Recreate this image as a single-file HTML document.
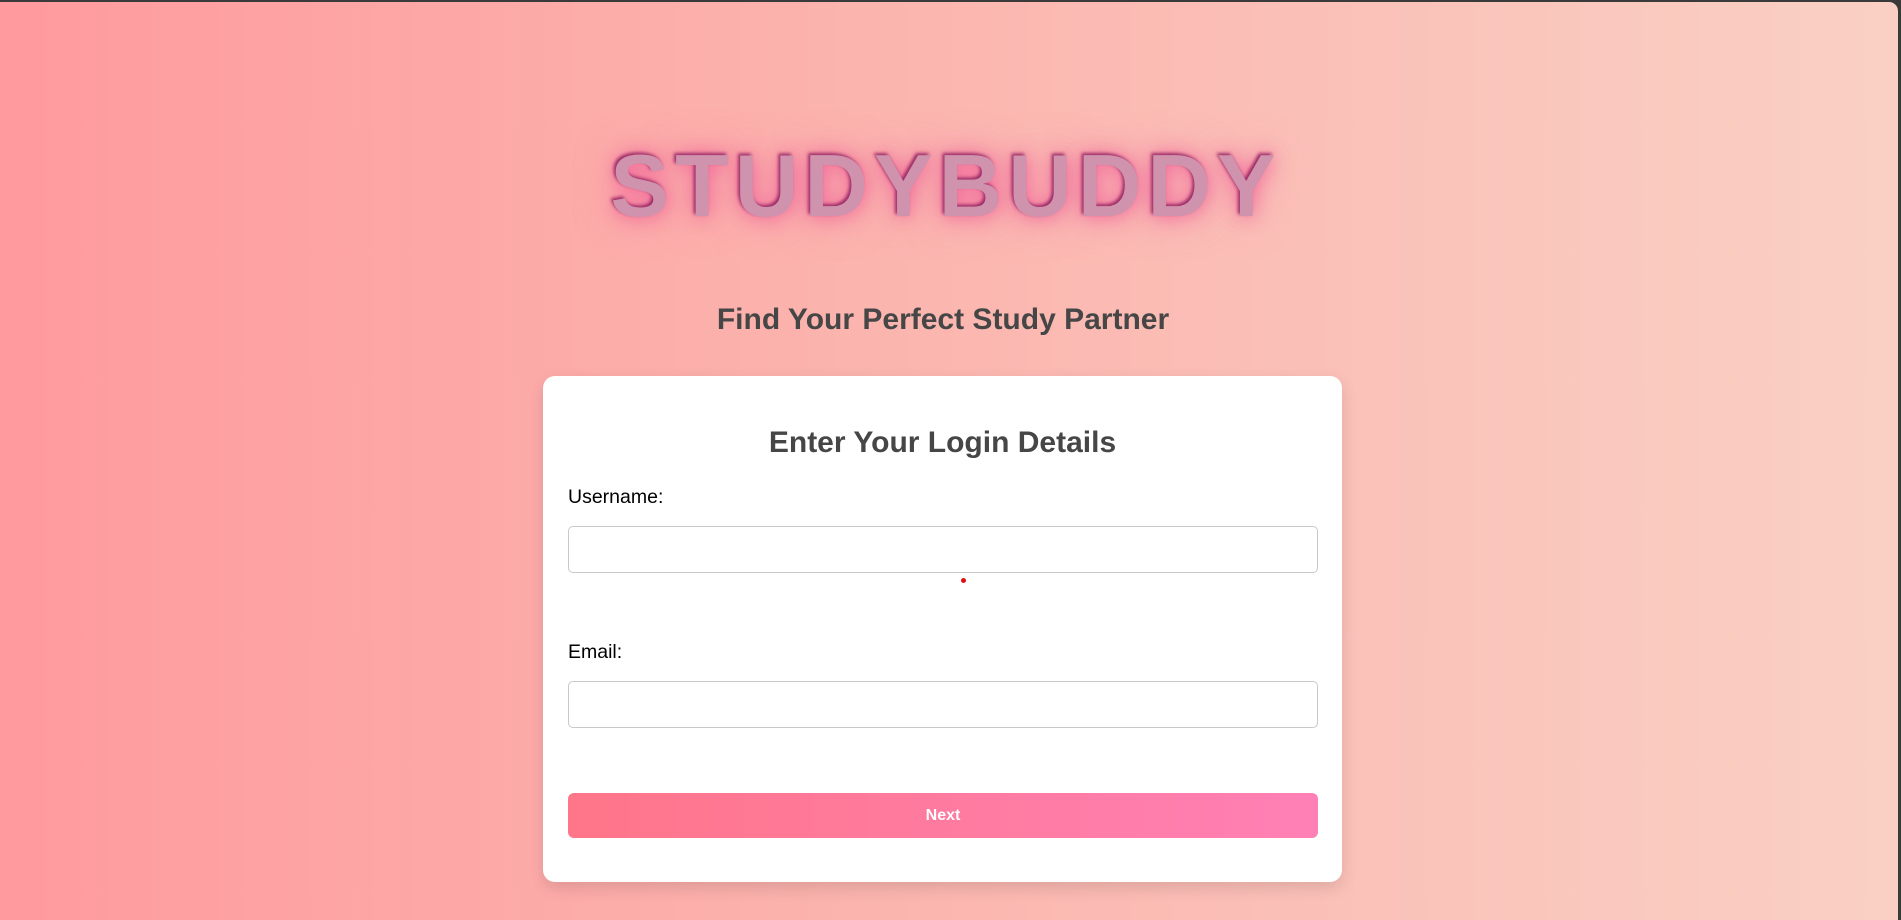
<!DOCTYPE html>
<html><head><meta charset="utf-8"><style>
html,body{margin:0;padding:0;width:1901px;height:920px;overflow:hidden;background:#3a3a3a;font-family:"Liberation Sans",Arial,sans-serif}
.page{position:absolute;left:0;top:2px;width:1898px;height:918px;border-top-right-radius:9px;background:linear-gradient(90deg,#ff9a9e 0%,#fbb4ae 45%,#fad0c4 100%)}
.logo{position:absolute;left:0;width:1886px;top:133px;text-align:center;font-size:88px;font-weight:bold;letter-spacing:6px;padding-left:6px;box-sizing:border-box;color:#cf93ad;text-shadow:-2px -2px 3px #9a2a66,0 0 18px rgba(240,90,150,.9),0 0 40px rgba(240,100,160,.6)}
.sub{position:absolute;left:0;width:1886px;top:301px;text-align:center;font-size:30px;font-weight:bold;color:#464646}
.card{position:absolute;left:543px;top:374px;width:799px;height:506px;background:#fff;border-radius:12px;box-shadow:0 6px 16px rgba(0,0,0,.12)}
.card h2{position:absolute;left:0;width:799px;margin:0;text-align:center;font-size:30px;color:#464646}
.lbl{position:absolute;left:25px;font-size:19.5px;color:#000}
.in{position:absolute;left:25px;width:750px;height:47px;box-sizing:border-box;border:1px solid #c9c9c9;border-radius:5px}
.btn{position:absolute;left:25px;top:417px;width:750px;height:45px;border-radius:6px;background:linear-gradient(90deg,#ff7589,#ff80b5);color:#fff;font-weight:bold;font-size:16px;text-align:center;line-height:45px}
.dot{position:absolute;left:418px;top:202px;width:5px;height:5px;border-radius:50%;background:#e01010}
</style></head><body>
<div class="page">
<div class="logo">STUDYBUDDY</div>
<div class="sub">Find Your Perfect Study Partner</div>
<div class="card">
<h2 style="top:50px">Enter Your Login Details</h2>
<div class="lbl" style="top:110px">Username:</div>
<div class="in" style="top:150px"></div>
<div class="dot"></div>
<div class="lbl" style="top:265px">Email:</div>
<div class="in" style="top:305px"></div>
<div class="btn">Next</div>
</div>
</div>
</body></html>
